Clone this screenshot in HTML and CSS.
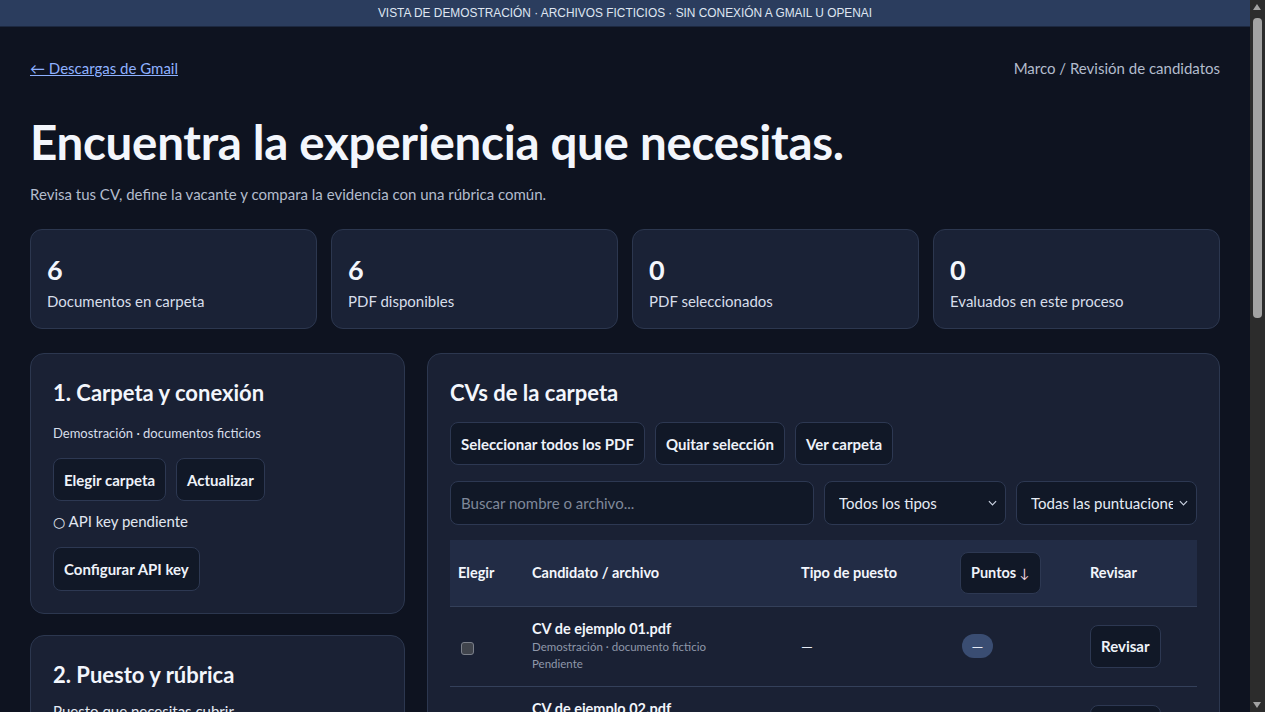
FILE: index.html
```
<!DOCTYPE html>
<html lang="es">
<head>
<meta charset="utf-8">
<title>Revisión de candidatos</title>
<link rel="stylesheet" href="styles.css">
</head>
<body>
<div class="banner">VISTA DE DEMOSTRACIÓN · ARCHIVOS FICTICIOS · SIN CONEXIÓN A GMAIL U OPENAI</div>
<main class="page">
  <nav class="topnav">
    <a class="back" href="#">← Descargas de Gmail</a>
    <span class="crumb">Marco / Revisión de candidatos</span>
  </nav>
  <header class="hero">
    <h1>Encuentra la experiencia que necesitas.</h1>
    <p class="lead">Revisa tus CV, define la vacante y compara la evidencia con una rúbrica común.</p>
  </header>
  <section class="stats">
    <div class="stat"><div class="num">6</div><div class="lbl">Documentos en carpeta</div></div>
    <div class="stat"><div class="num">6</div><div class="lbl">PDF disponibles</div></div>
    <div class="stat"><div class="num">0</div><div class="lbl">PDF seleccionados</div></div>
    <div class="stat"><div class="num">0</div><div class="lbl">Evaluados en este proceso</div></div>
  </section>
  <div class="layout">
    <aside class="side">
      <section class="panel first">
        <h2>1. Carpeta y conexión</h2>
        <p class="small">Demostración · documentos ficticios</p>
        <div class="btnrow">
          <button class="btn">Elegir carpeta</button>
          <button class="btn">Actualizar</button>
        </div>
        <p class="status"><span class="ring">○</span> API key pendiente</p>
        <div class="btnrow">
          <button class="btn">Configurar API key</button>
        </div>
      </section>
      <section class="panel">
        <h2>2. Puesto y rúbrica</h2>
        <p class="body">Puesto que necesitas cubrir</p>
      </section>
    </aside>
    <section class="panel main">
      <h2>CVs de la carpeta</h2>
      <div class="btnrow">
        <button class="btn">Seleccionar todos los PDF</button>
        <button class="btn">Quitar selección</button>
        <button class="btn">Ver carpeta</button>
      </div>
      <div class="filters">
        <input class="search" type="text" placeholder="Buscar nombre o archivo...">
        <div class="select"><span>Todos los tipos</span><svg viewBox="0 0 10 6" width="9" height="6"><path d="M1 1l4 4 4-4" fill="none" stroke="#c9d1e0" stroke-width="1.3"/></svg></div>
        <div class="select"><span>Todas las puntuaciones</span><svg viewBox="0 0 10 6" width="9" height="6"><path d="M1 1l4 4 4-4" fill="none" stroke="#c9d1e0" stroke-width="1.3"/></svg></div>
      </div>
      <table class="tbl">
        <colgroup>
          <col class="c1"><col class="c2"><col class="c3"><col class="c4"><col class="c5">
        </colgroup>
        <thead>
          <tr>
            <th>Elegir</th>
            <th>Candidato / archivo</th>
            <th>Tipo de puesto</th>
            <th><button class="btn sort">Puntos <span class="arrow">↓</span></button></th>
            <th>Revisar</th>
          </tr>
        </thead>
        <tbody>
          <tr>
            <td><span class="check"></span></td>
            <td><div class="fname">CV de ejemplo 01.pdf</div><div class="meta">Demostración · documento ficticio</div><div class="meta">Pendiente</div></td>
            <td class="dash">—</td>
            <td><span class="pill">—</span></td>
            <td><button class="btn">Revisar</button></td>
          </tr>
          <tr>
            <td><span class="check"></span></td>
            <td><div class="fname">CV de ejemplo 02.pdf</div><div class="meta">Demostración · documento ficticio</div><div class="meta">Pendiente</div></td>
            <td class="dash">—</td>
            <td><span class="pill">—</span></td>
            <td><button class="btn">Revisar</button></td>
          </tr>
        </tbody>
      </table>
    </section>
  </div>
</main>
<div class="scrollbar" aria-hidden="true">
  <span class="sb-up"></span>
  <span class="sb-thumb"></span>
  <span class="sb-down"></span>
</div>
</body>
</html>
```

FILE: styles.css
```
* { box-sizing: border-box; }
html, body { margin: 0; padding: 0; }
html { background: #0e1320; }
body {
  margin-right: 15px;
  background: #0e1320;
  color: #e6ebf5;
  font-family: "Lato", "Noto Sans", sans-serif;
  font-size: 15px;
}
.banner {
  background: #2b3d5e;
  color: #dfe6f2;
  font-family: "Liberation Sans", Arial, sans-serif;
  font-size: 11.9px;
  height: 27px;
  line-height: 27px;
  text-align: center;
  border-bottom: 1px solid #1c2840;
}
.page { padding: 0 30px 40px; }
.topnav {
  display: flex;
  justify-content: space-between;
  align-items: center;
  padding-top: 30px;
  height: 52px;
}
.back { color: #8eb1ff; font-size: 15px; text-decoration: underline; }
.crumb { color: #b3bccd; font-size: 15px; }
.hero { padding-top: 34px; }
h1 {
  margin: 0;
  font-size: 47.5px;
  font-weight: 700;
  color: #f3f6fc;
  letter-spacing: -0.3px;
  line-height: 58px;
}
.lead { margin: 13px 0 0; color: #b3bccd; font-size: 15px; line-height: 20px; }
.stats {
  display: grid;
  grid-template-columns: repeat(4, 1fr);
  gap: 14px;
  margin-top: 25px;
}
.stat {
  background: #1a2236;
  border: 1px solid #2c374f;
  border-radius: 12px;
  height: 100px;
  padding: 24px 16px 0;
}
.num { font-size: 27px; font-weight: 700; line-height: 32px; color: #f3f6fc; }
.lbl { margin-top: 6px; font-size: 15px; color: #d7deea; line-height: 18px; }
.layout {
  display: grid;
  grid-template-columns: 375px 1fr;
  gap: 22px;
  margin-top: 24px;
  align-items: start;
}
.side { display: flex; flex-direction: column; gap: 21px; }
.panel {
  background: #1a2134;
  border: 1px solid #2c374f;
  border-radius: 14px;
  padding: 24px 22px 22px;
}
.panel.first { padding-bottom: 22px; }
h2 { margin: 0; font-size: 22px; font-weight: 700; line-height: 30px; color: #f3f6fc; }
.small { margin: 17px 0 0; font-size: 13px; color: #d7deea; line-height: 17px; }
.btnrow { display: flex; gap: 10px; margin-top: 16px; }
.btn {
  background: #111827;
  color: #eef2f9;
  border: 1px solid #2d3852;
  border-radius: 8px;
  height: 43px;
  padding: 0 10px;
  font-family: inherit;
  font-size: 15px;
  font-weight: 700;
}
.status { margin: 11px 0 0; font-size: 15px; color: #e1e7f1; line-height: 18px; }
.ring { font-family: "DejaVu Sans", sans-serif; font-size: 14px; line-height: 14px; }
.status + .btnrow { margin-top: 17px; }
.status + .btnrow .btn { height: 44px; }
.body { margin: 12px 0 0; font-size: 15px; }
.main { padding-bottom: 0; }
.main .btnrow { margin-top: 14px; }
.filters {
  display: grid;
  grid-template-columns: 1fr 182px 181px;
  gap: 10px;
  margin-top: 16px;
}
.search, .select {
  height: 44px;
  background: #111827;
  border: 1px solid #2d3852;
  border-radius: 8px;
  color: #e6ebf5;
  font-family: inherit;
  font-size: 15px;
}
.search { padding: 0 10px; }
.search::placeholder { color: #7f889a; }
.select {
  display: flex;
  align-items: center;
  justify-content: space-between;
  padding: 0 8px 0 14px;
  overflow: hidden;
  white-space: nowrap;
}
.select span { overflow: hidden; }
.select svg { flex: none; margin-left: 6px; }
.tbl {
  width: 100%;
  border-collapse: collapse;
  margin-top: 15px;
  table-layout: fixed;
}
.c1 { width: 74px; }
.c2 { width: 269px; }
.c3 { width: 159px; }
.c4 { width: 130px; }
thead tr { background: #222c45; }
th {
  height: 66px;
  text-align: left;
  padding: 0 8px;
  font-size: 14.5px;
  font-weight: 700;
  color: #f3f6fc;
  border-bottom: 1px solid #34405a;
}
.sort { height: 42px; padding: 0 10px; font-size: 14.5px; }
.arrow { color: #ecd2da; font-weight: 400; font-size: 13px; }
td {
  height: 80px;
  padding: 0 8px;
  vertical-align: middle;
  border-bottom: 1px solid #34405a;
  font-size: 15px;
}
.check {
  display: inline-block;
  width: 13px;
  height: 13px;
  border: 1px solid #7b808a;
  background: #40444c;
  border-radius: 3px;
  margin-left: 3px;
  vertical-align: middle;
}
.fname { font-weight: 700; font-size: 14.5px; line-height: 18px; color: #f3f6fc; }
.meta { font-size: 11.5px; color: #8f98aa; line-height: 17px; }
.dash { color: #e6ebf5; padding-left: 8px; }
.pill {
  display: inline-block;
  background: #3a4d72;
  color: #e6ebf5;
  border-radius: 12px;
  width: 31px;
  height: 24px;
  line-height: 24px;
  text-align: center;
  margin-left: 2px;
}
td .btn { height: 43px; padding: 0 10px; }
.scrollbar {
  position: fixed;
  top: 0;
  right: 0;
  width: 15px;
  height: 100vh;
  background: #2c2c2c;
}
.sb-up, .sb-down {
  position: absolute;
  left: 3px;
  width: 0;
  height: 0;
  border-left: 4.5px solid transparent;
  border-right: 4.5px solid transparent;
}
.sb-up { top: 4px; border-bottom: 6px solid #a3a3a3; }
.sb-down { bottom: 4px; border-top: 6px solid #a3a3a3; }
.sb-thumb {
  position: absolute;
  top: 18px;
  left: 3px;
  width: 9px;
  height: 300px;
  background: #a3a3a3;
  border-radius: 4px;
}
```
